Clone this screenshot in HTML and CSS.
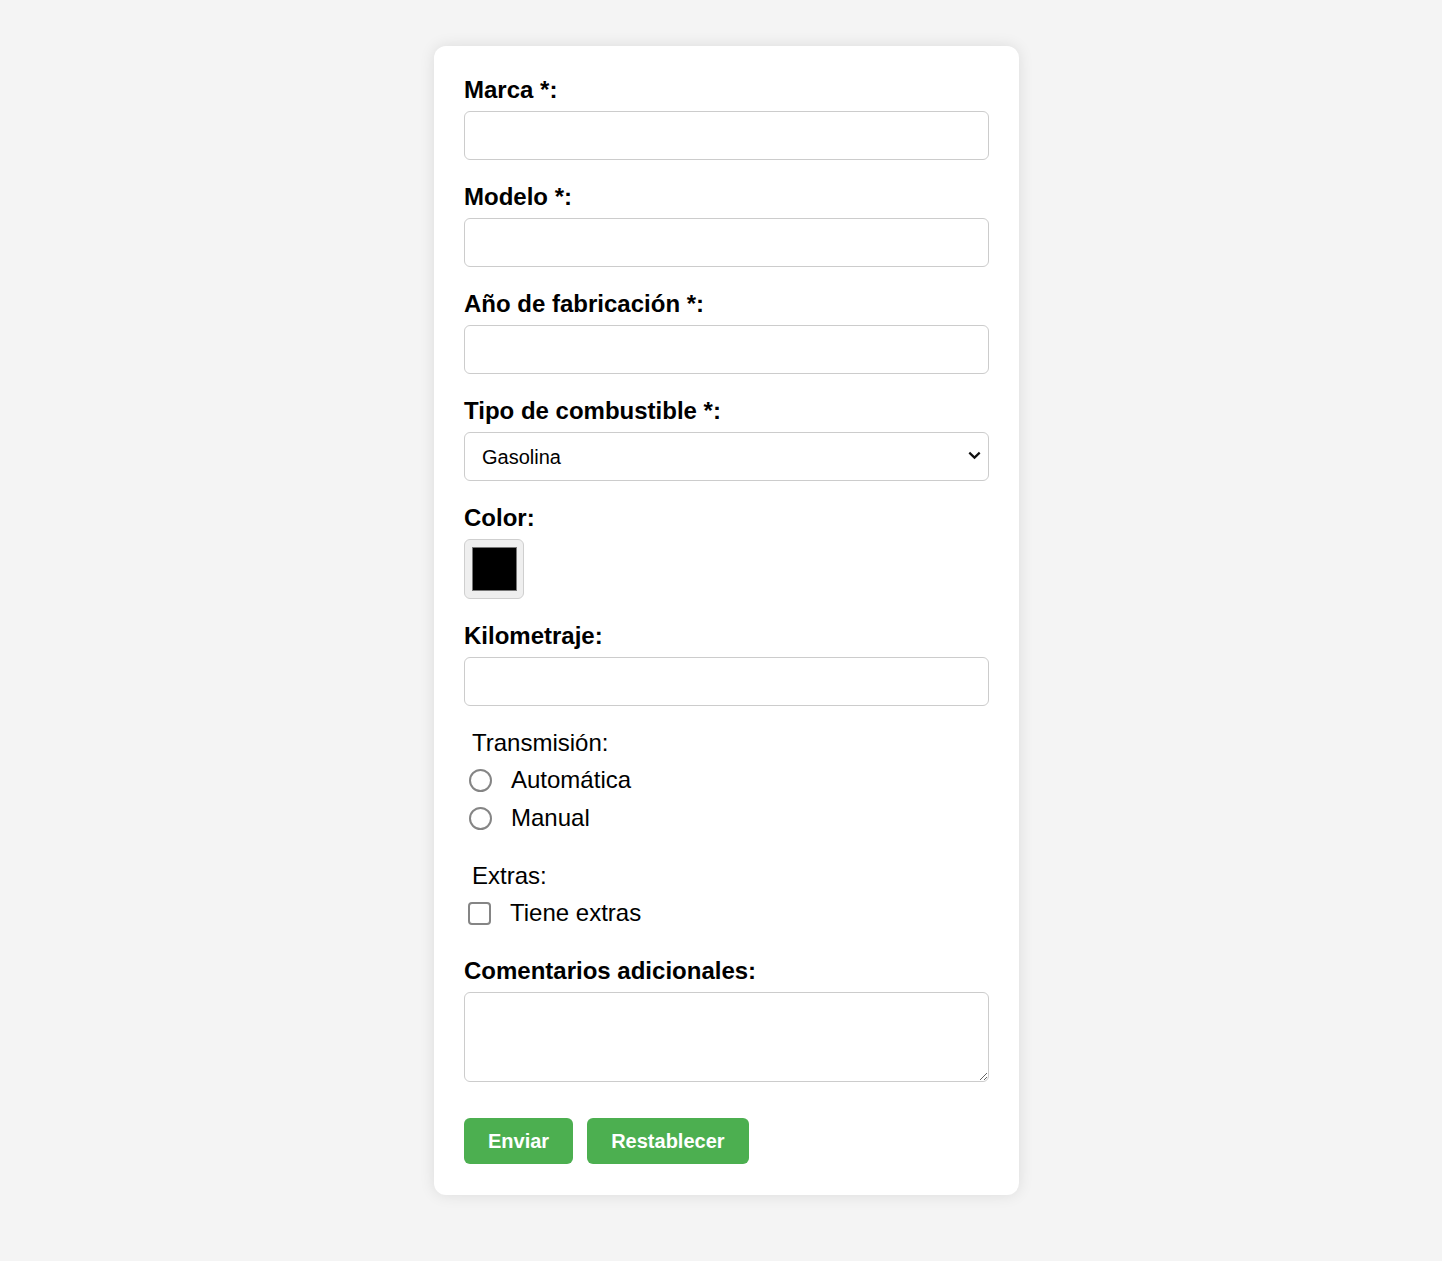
FILE: index.html
```html
<!DOCTYPE html>
<html lang="es">
<head>
<meta charset="utf-8">
<title>Formulario de vehículo</title>
<link rel="stylesheet" href="styles.css">
</head>
<body>
<form class="card">
  <label class="field-label" for="marca">Marca *:</label>
  <input class="text-input" type="text" id="marca">

  <label class="field-label" for="modelo">Modelo *:</label>
  <input class="text-input" type="text" id="modelo">

  <label class="field-label" for="anio">Año de fabricación *:</label>
  <input class="text-input" type="text" id="anio">

  <label class="field-label" for="combustible">Tipo de combustible *:</label>
  <div class="select-wrap">
    <select class="select-input" id="combustible">
      <option>Gasolina</option>
      <option>Diésel</option>
      <option>Eléctrico</option>
      <option>Híbrido</option>
    </select>
    <svg class="chevron" width="13" height="9" viewBox="0 0 13 9" aria-hidden="true">
      <path d="M1.3 1.6 L6.5 6.6 L11.7 1.6" fill="none" stroke="#111" stroke-width="2.2"/>
    </svg>
  </div>

  <label class="field-label" for="color">Color:</label>
  <input class="color-input" type="color" id="color" value="#000000">

  <label class="field-label" for="km">Kilometraje:</label>
  <input class="text-input" type="text" id="km">

  <div class="group">
    <div class="group-title">Transmisión:</div>
    <label class="option"><input class="radio" type="radio" name="trans"><span>Automática</span></label>
    <label class="option"><input class="radio" type="radio" name="trans"><span>Manual</span></label>
  </div>

  <div class="group">
    <div class="group-title">Extras:</div>
    <label class="option"><input class="check" type="checkbox"><span>Tiene extras</span></label>
  </div>

  <label class="field-label" for="comentarios">Comentarios adicionales:</label>
  <textarea class="text-area" id="comentarios"></textarea>

  <div class="actions">
    <button class="btn" type="submit">Enviar</button>
    <button class="btn" type="reset">Restablecer</button>
  </div>
</form>
</body>
</html>
```
FILE: styles.css
```css
html, body {
  margin: 0;
}
body {
  background: #f4f4f4;
  font-family: "Liberation Sans", Arial, sans-serif;
  font-size: 24px;
  color: #000;
  padding: 46px 0 64px 11px;
}
.card {
  box-sizing: border-box;
  width: 585px;
  margin: 0 auto;
  background: #fff;
  border-radius: 12px;
  padding: 30px 30px 31px;
  box-shadow: 0 0 15px rgba(0, 0, 0, 0.1);
}
.field-label {
  display: block;
  font-weight: bold;
  font-size: 24px;
  line-height: 28px;
  margin-bottom: 7px;
}
.text-input,
.select-input,
.text-area {
  display: block;
  box-sizing: border-box;
  width: 100%;
  border: 1px solid #ccc;
  border-radius: 6px;
  background: #fff;
  font-family: "Liberation Sans", Arial, sans-serif;
  font-size: 20px;
  color: #000;
  margin: 0 0 23px;
}
.text-input {
  height: 49px;
  padding: 0 12px;
}
.select-wrap {
  position: relative;
}
.select-input {
  appearance: none;
  -webkit-appearance: none;
  height: 49px;
  padding: 0 40px 0 17px;
}
.chevron {
  position: absolute;
  right: 8px;
  top: 19px;
  pointer-events: none;
}
.color-input {
  display: block;
  box-sizing: border-box;
  width: 60px;
  height: 60px;
  margin: 2px 0 23px;
  padding: 0;
  border: 1px solid #cfcfcf;
  border-radius: 6px;
  background: #efefef;
  cursor: pointer;
}
.color-input::-webkit-color-swatch-wrapper {
  padding: 7px 6px 7px 7px;
}
.color-input::-webkit-color-swatch {
  border: 1px solid #777;
  border-radius: 0;
}
.group {
  margin-bottom: 30px;
}
.group-title {
  padding-left: 8px;
  line-height: 27px;
}
.option {
  display: flex;
  align-items: center;
  margin-top: 10px;
  padding-left: 5px;
  line-height: 28px;
}
.radio,
.check {
  appearance: none;
  -webkit-appearance: none;
  box-sizing: border-box;
  width: 23px;
  height: 23px;
  margin: 0 19px 0 0;
  border: 2px solid #858585;
  background: #fff;
  flex: none;
}
.radio {
  border-radius: 50%;
}
.check {
  border-radius: 4px;
  margin-left: -1px;
}
.text-area {
  height: 90px;
  padding: 12px;
  margin-top: 2px;
  margin-bottom: 36px;
}
.actions {
  display: flex;
  gap: 14px;
}
.btn {
  height: 46px;
  padding: 0 24px;
  border: none;
  border-radius: 6px;
  background: #4caf50;
  color: #fff;
  font-family: "Liberation Sans", Arial, sans-serif;
  font-weight: bold;
  font-size: 20px;
  cursor: pointer;
}
```
